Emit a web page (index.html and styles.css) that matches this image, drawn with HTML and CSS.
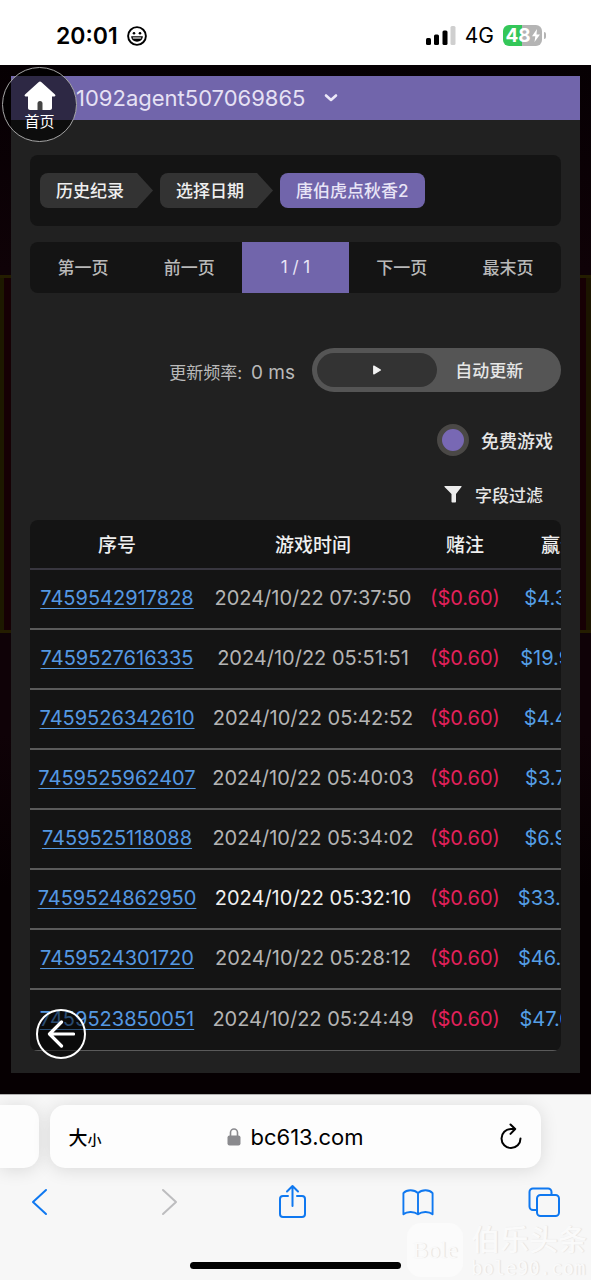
FILE: index.html
```html
<!DOCTYPE html>
<html lang="zh-CN">
<head>
<meta charset="utf-8">
<meta name="viewport" content="width=device-width, initial-scale=1">
<title>历史纪录</title>
<link rel="stylesheet" href="styles.css">
</head>
<body>
<div class="status">
  <div class="status-left">
    <span class="clock">20:01</span>
    <svg class="face" viewBox="0 0 20 20" aria-hidden="true"><circle cx="10" cy="10" r="8.9" fill="none" stroke="#000" stroke-width="1.9"/><circle cx="7" cy="7.2" r="1.3"/><circle cx="13" cy="7.2" r="1.3"/><path d="M4.2 10.3h11.6c0 3.3-2.6 5.4-5.8 5.4s-5.8-2.1-5.8-5.4z"/><path d="M5.8 12h8.4" stroke="#fff" stroke-width="1.1"/></svg>
  </div>
  <div class="status-right">
    <svg class="signal" viewBox="0 0 30 20" aria-hidden="true"><rect x="0" y="12" width="5" height="7" rx="1.5"/><rect x="8" y="8.500" width="5" height="10.500" rx="1.5"/><rect x="16.500" y="4.500" width="5" height="14.500" rx="1.5"/><rect x="24.500" y="0" width="5" height="19" rx="1.5" fill="#cfcfcf"/></svg>
    <span class="network">4G</span>
    <span class="battery"><span>48</span><svg viewBox="0 0 8 13" aria-hidden="true"><path d="M5 0 0 7.200h3.300L2.500 13 8 5.500H4.500z" fill="#fff"/></svg></span>
  </div>
</div>

<main class="game">
  <section class="panel">
    <header class="panel-head">
      <button class="user" type="button">1092agent507069865
        <svg viewBox="0 0 14 10" aria-hidden="true"><path d="M2 2.500l5 4.500 5-4.500" fill="none" stroke="#ece8f8" stroke-width="2.600" stroke-linecap="round" stroke-linejoin="round"/></svg>
      </button>
    </header>
    <div class="content">
      <nav class="crumbs">
        <a class="crumb" href="#"><span>历史纪录</span></a>
        <a class="crumb" href="#"><span>选择日期</span></a>
        <a class="crumb current" href="#"><span>唐伯虎点秋香2</span></a>
      </nav>
      <div class="pager">
        <button type="button">第一页</button>
        <button type="button">前一页</button>
        <button type="button" class="current">1 / 1</button>
        <button type="button">下一页</button>
        <button type="button">最末页</button>
      </div>
      <div class="tools">
        <div class="refresh">
          <span class="rate">更新频率: <span>0 ms</span></span>
          <div class="switch">
            <button type="button" class="play" aria-label="播放"><svg viewBox="0 0 10 10" aria-hidden="true"><path d="M1.800 1.200v7.600L8.400 5z" fill="#f2f2f2" stroke="#f2f2f2" stroke-width="1.400" stroke-linejoin="round"/></svg></button>
            <button type="button" class="auto">自动更新</button>
          </div>
        </div>
        <label class="free" for="free"><input type="checkbox" id="free" checked>免费游戏</label>
        <button type="button" class="filter"><svg viewBox="0 0 18 18" aria-hidden="true"><path d="M1 1h16c.6 0 .7.600.4 1L12 9v7.500c0 .6-.4 1-1 1H8.500c-.6 0-1-.4-1-1V9L.6 2C.3 1.600.4 1 1 1z" fill="#ececec"/></svg>字段过滤</button>
      </div>
      <div class="table-wrap">
        <table>
          <colgroup><col class="c-id"><col class="c-time"><col class="c-bet"><col class="c-win"></colgroup>
          <thead><tr><th>序号</th><th>游戏时间</th><th>赌注</th><th>赢分</th></tr></thead>
          <tbody>
            <tr><td><a href="#">7459542917828</a></td><td>2024/10/22 07:37:50</td><td class="bet">($0.60)</td><td class="win">$4.30</td></tr>
            <tr><td><a href="#">7459527616335</a></td><td>2024/10/22 05:51:51</td><td class="bet">($0.60)</td><td class="win">$19.90</td></tr>
            <tr><td><a href="#">7459526342610</a></td><td>2024/10/22 05:42:52</td><td class="bet">($0.60)</td><td class="win">$4.40</td></tr>
            <tr><td><a href="#">7459525962407</a></td><td>2024/10/22 05:40:03</td><td class="bet">($0.60)</td><td class="win">$3.70</td></tr>
            <tr><td><a href="#">7459525118088</a></td><td>2024/10/22 05:34:02</td><td class="bet">($0.60)</td><td class="win">$6.90</td></tr>
            <tr class="active"><td><a href="#">7459524862950</a></td><td>2024/10/22 05:32:10</td><td class="bet">($0.60)</td><td class="win">$33.40</td></tr>
            <tr><td><a href="#">7459524301720</a></td><td>2024/10/22 05:28:12</td><td class="bet">($0.60)</td><td class="win">$46.00</td></tr>
            <tr><td><a href="#">7459523850051</a></td><td>2024/10/22 05:24:49</td><td class="bet">($0.60)</td><td class="win">$47.00</td></tr>
          </tbody>
        </table>
      </div>
    </div>
  </section>
  <a class="home" href="#">
    <svg viewBox="0 0 32 30" aria-hidden="true"><path d="M14.500 1.200c.9-.9 2.100-.9 3 0L31 13.500c.8.800.4 2-.7 2H28V27c0 1.200-.8 2-2 2H6c-1.200 0-2-.8-2-2V15.500H1.700c-1.100 0-1.500-1.200-.7-2z" fill="#fff"/><path d="M13.500 29v-6.500a2.500 2.500 0 0 1 5 0V29z" fill="#444"/></svg>
    <span>首页</span>
  </a>
  <button class="back" type="button" aria-label="返回"><svg viewBox="0 0 28 28" aria-hidden="true"><path d="M14.500 2 2.500 14l12 12M3 14h23.500" fill="none" stroke="#fff" stroke-width="3.200" stroke-linecap="round" stroke-linejoin="round"/></svg></button>
</main>

<footer class="browser">
  <div class="tabs">
    <div class="tab-prev"></div>
    <div class="address">
      <button type="button" class="size" aria-label="大小">大<small>小</small></button>
      <span class="url"><svg viewBox="0 0 14 18" aria-hidden="true"><rect x="0.500" y="7.500" width="13" height="10" rx="2" fill="#8a8a8e"/><path d="M3.500 8V4.500a3.500 3.500 0 0 1 7 0V8" fill="none" stroke="#8a8a8e" stroke-width="1.600"/></svg>bc613.com</span>
      <button type="button" class="reload" aria-label="重新载入"><svg viewBox="0 0 24 28" aria-hidden="true"><path d="M21.500 15.500a9.500 9.500 0 1 1-9.500-9.500l4 .1M11.500 1.500 16.200 6l-4.700 4.900" fill="none" stroke="#000" stroke-width="2" stroke-linecap="round" stroke-linejoin="round"/></svg></button>
    </div>
  </div>
  <nav class="toolbar">
    <button type="button" aria-label="后退"><svg viewBox="0 0 32 36"><path d="M22 6 9 18l13 12"/></svg></button>
    <button type="button" aria-label="前进"><svg class="off" viewBox="0 0 32 36"><path d="m13 6 13 12-13 12"/></svg></button>
    <button type="button" aria-label="分享"><svg viewBox="0 0 32 36"><path d="M12 12H7a3 3 0 0 0-3 3v15a3 3 0 0 0 3 3h19a3 3 0 0 0 3-3V15a3 3 0 0 0-3-3h-5M16.500 22V2M11 7.500 16.500 2 22 7.500"/></svg></button>
    <button type="button" aria-label="书签"><svg viewBox="0 0 34 36"><path d="M17 8.500C13 4.500 5 4.500 1.500 8.500V31c4-3.500 11.500-3 15.500 0V8.500c4-4 12-4 15.500 0V31c-4-3.500-11.500-3-15.500 0"/></svg></button>
    <button type="button" aria-label="标签页"><svg viewBox="0 0 32 36"><rect x="9" y="11" width="22" height="21" rx="3.500"/><path d="M9 26H5a3.500 3.500 0 0 1-3.500-3.500V8A3.500 3.500 0 0 1 5 4.500h15A3.500 3.500 0 0 1 23.500 8v3"/></svg></button>
  </nav>
  <div class="indicator"></div>
  <div class="watermark">
    <span class="mark">Bole</span>
    <span class="mark-text"><b>伯乐头条</b><i>bole90.com</i></span>
  </div>
</footer>
</body>
</html>
```
FILE: styles.css
```css
* { box-sizing: border-box; }
body {
  margin: 0;
  background: #f7f7f7;
  color: #e6e6e6;
  font-family: Inter, "Noto Sans CJK SC", sans-serif;
  font-size: 17px;
}
button {
  padding: 0;
  border: 0;
  background: none;
  color: inherit;
  font: inherit;
  cursor: pointer;
}
svg { display: block; }
a { color: inherit; text-decoration: none; }

/* phone status bar */
.status {
  display: flex;
  align-items: center;
  justify-content: space-between;
  height: 65px;
  padding: 6px 49px 0 56px;
  background: #fff;
  color: #000;
}
.status-left, .status-right { display: flex; align-items: center; }
.status-left { gap: 9px; }
.status-right { gap: 9px; }
.clock { font-size: 23px; font-weight: 600; }
.face { width: 20px; height: 20px; }
.signal { width: 30px; height: 20px; }
.network { font-size: 21px; }
.battery {
  position: relative;
  display: flex;
  align-items: center;
  justify-content: center;
  gap: 1px;
  width: 39px;
  height: 21px;
  border-radius: 6px;
  background: linear-gradient(90deg, #34c759 48%, #b4b4b4 48%);
  color: #fff;
  font-size: 19px;
  font-weight: 700;
}
.battery svg { width: 8px; height: 13px; }
.battery::after {
  content: "";
  position: absolute;
  top: 7px;
  right: -4px;
  width: 2px;
  height: 7px;
  border-radius: 0 2px 2px 0;
  background: #b4b4b4;
}

/* game page */
.game {
  position: relative;
  padding: 11px 11px 21px;
  background:
    linear-gradient(#241d00, #241d00) 0 210px / 11px 3px no-repeat,
    linear-gradient(#241d00, #241d00) 0 565px / 11px 3px no-repeat,
    linear-gradient(#241d00, #241d00) 100% 210px / 11px 3px no-repeat,
    linear-gradient(#241d00, #241d00) 100% 565px / 11px 3px no-repeat,
    linear-gradient(90deg, #1d1900 4px, #160004 4px) 0 210px / 11px 358px no-repeat,
    linear-gradient(90deg, #170004 6px, #1c1500 6px) 100% 210px / 11px 358px no-repeat,
    linear-gradient(#060003, #0f0207 20%, #0f0207 65%, #060002 80%);
}
.panel { background: #212121; }
.panel-head {
  display: flex;
  align-items: center;
  height: 44px;
  padding-left: 65px;
  background: #7165ab;
}
.user {
  display: flex;
  align-items: center;
  gap: 19px;
  color: #e6e1f4;
  font-size: 22px;
}
.user svg { width: 14px; height: 10px; }
.content { padding: 35px 19px 22px; }

.crumbs {
  display: flex;
  gap: 7px;
  padding: 18px 10px;
  border-radius: 8px;
  background: #141414;
}
.crumb { display: flex; height: 35px; color: #efefef; font-weight: 500; }
.crumb span {
  display: flex;
  align-items: center;
  padding: 0 13px 2px 16px;
  border-radius: 8px 0 0 8px;
  background: #333;
}
.crumb::after {
  content: "";
  width: 16px;
  background: #333;
  clip-path: polygon(0 0, 100% 50%, 0 100%);
}
.crumb.current span {
  padding-right: 17px;
  border-radius: 8px;
  background: #7165ab;
  color: #e8e4f6;
}
.crumb.current::after { content: none; }

.pager {
  display: grid;
  grid-template-columns: repeat(5, 1fr);
  height: 51px;
  margin-top: 16px;
  overflow: hidden;
  border-radius: 8px;
  background: #141414;
  color: #b9b9b9;
  font-weight: 500;
}
.pager button { padding-bottom: 2px; }
.pager .current { background: #7165ab; color: #e8e4f6; font-weight: 400; }

.tools {
  display: flex;
  flex-direction: column;
  align-items: flex-end;
  margin-top: 55px;
}
.refresh { display: flex; align-items: center; gap: 17px; }
.rate { padding-top: 2px; color: #b9b9b9; }
.rate span { margin-left: 4px; font-size: 19px; }
.switch {
  display: flex;
  width: 249px;
  height: 44px;
  padding: 5px;
  border-radius: 22px;
  background: #555;
}
.switch button { flex: 0 0 50%; }
.play {
  display: flex;
  align-items: center;
  justify-content: center;
  border-radius: 17px;
  background: #333;
}
.play svg { width: 10px; height: 10px; }
.switch .auto { padding: 0 14px 2px 0; font-weight: 500; }
.free {
  display: flex;
  align-items: center;
  gap: 12px;
  margin: 32px 8px 0 0;
  font-size: 18px;
  font-weight: 500;
}
.free input {
  appearance: none;
  width: 32px;
  height: 32px;
  margin: 0;
  border: 5px solid #4a4846;
  border-radius: 50%;
  background: #7868b4;
}
.filter {
  display: flex;
  align-items: center;
  gap: 13px;
  height: 24px;
  margin: 26px 18px 14px 0;
  font-weight: 500;
}
.filter svg { width: 18px; height: 18px; }

.table-wrap {
  overflow-x: auto;
  scrollbar-width: none;
  border-radius: 8px;
  background: #141414;
}
table {
  width: 582px;
  border-collapse: separate;
  border-spacing: 0;
  table-layout: fixed;
  color: #b4b4b4;
  font-size: 20px;
}
.c-id { width: 174px; }
.c-time { width: 218px; }
.c-bet { width: 86px; }
.c-win { width: 104px; }
th {
  height: 50px;
  padding: 0 0 2px;
  border-bottom: 2px solid #38363f;
  color: #efefef;
  font-size: 19px;
  font-weight: 500;
}
td {
  height: 60px;
  padding: 0 0 2px;
  border-bottom: 2px solid #5a5a5a;
  text-align: center;
  white-space: nowrap;
}
td a {
  color: #5498e2;
  text-decoration: underline;
  text-decoration-thickness: 1px;
  text-underline-offset: 3px;
}
td.bet { color: #e3215b; }
td.win { padding-right: 16px; color: #559fe6; }
.active { color: #efefef; }
tbody tr:last-child td { height: 61px; border-bottom-width: 1px; }

/* floating buttons */
.home {
  position: absolute;
  top: 2px;
  left: 2px;
  display: flex;
  flex-direction: column;
  align-items: center;
  width: 75px;
  height: 75px;
  padding-top: 13px;
  border: 1px solid #a5a5a5;
  border-radius: 50%;
  background: rgba(0, 0, 0, .6);
  color: #fff;
  font-size: 15px;
  line-height: 22px;
}
.home svg { width: 32px; height: 30px; }
.back {
  position: absolute;
  bottom: 35px;
  left: 36px;
  display: flex;
  align-items: center;
  justify-content: center;
  width: 50px;
  height: 50px;
  border: 2px solid #fff;
  border-radius: 50%;
  background: rgba(0, 0, 0, .5);
}
.back svg { width: 28px; height: 28px; }

/* browser bars */
.browser {
  position: relative;
  padding-bottom: 11px;
  overflow: hidden;
  border-top: 1px solid #b0b0b0;
  background: #f7f7f7;
  color: #000;
}
.tabs {
  display: grid;
  grid-template-columns: 39px 1fr;
  gap: 11px;
  padding: 10px 50px 0 0;
}
.tab-prev, .address {
  height: 63px;
  background: #fdfdfd;
  box-shadow: 0 2px 18px rgba(0, 0, 0, .12);
}
.tab-prev { border-radius: 0 15px 15px 0; }
.address {
  display: grid;
  grid-template-columns: 52px 1fr 52px;
  align-items: center;
  padding: 0 4px 0 4px;
  border-radius: 15px;
}
.size { font-size: 19px; font-weight: 500; padding-left: 10px; }
.size small { font-size: 14px; }
.url {
  display: flex;
  align-items: center;
  justify-content: center;
  gap: 9px;
  font-size: 22px;
}
.url svg { width: 14px; height: 18px; }
.reload { justify-self: center; }
.reload svg { width: 24px; height: 28px; }
.toolbar {
  display: flex;
  justify-content: space-between;
  padding: 16px 31px 0 24px;
}
.toolbar svg {
  width: 32px;
  height: 36px;
  fill: none;
  stroke: #0f78f0;
  stroke-width: 2;
  stroke-linecap: round;
  stroke-linejoin: round;
}
.toolbar .off { stroke: #bdbdbf; }
.indicator {
  width: 211px;
  height: 7px;
  margin: 42px auto 0;
  border-radius: 4px;
  background: #000;
}
.watermark {
  position: absolute;
  right: 4px;
  bottom: 3px;
  display: flex;
  align-items: center;
  gap: 8px;
  color: #fafafa;
  text-shadow: 1px 0 1px #e0e0e0;
}
.mark {
  display: flex;
  align-items: center;
  justify-content: center;
  width: 56px;
  height: 54px;
  border-radius: 14px;
  background: #fbfbfb;
  font-family: "Liberation Serif", serif;
  font-size: 24px;
}
.mark-text { display: flex; flex-direction: column; }
.mark-text b { font-size: 29px; font-weight: 500; line-height: 36px; }
.mark-text i {
  font-family: "DejaVu Sans Mono", monospace;
  font-size: 19px;
  font-style: normal;
  line-height: 18px;
}
```
